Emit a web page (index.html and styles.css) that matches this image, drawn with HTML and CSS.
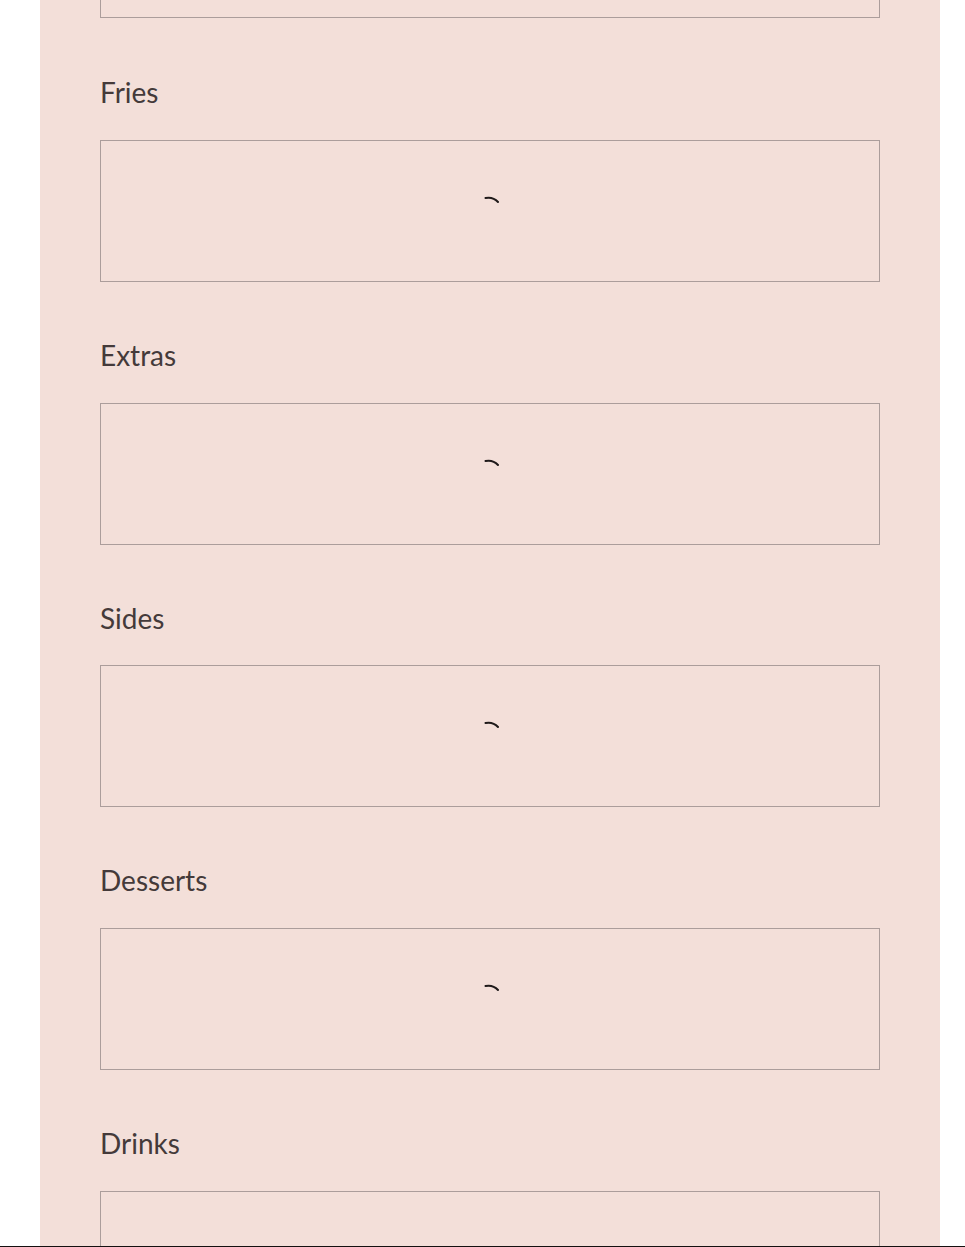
FILE: index.html
```html
<!DOCTYPE html>
<html>
<head>
<meta charset="utf-8">
<link rel="stylesheet" href="styles.css">
</head>
<body>
<main class="panel">
  <div class="box box-partial"></div>
  <section class="section section-first">
    <h2 class="title">Fries</h2>
    <div class="box"><svg class="spinner" viewBox="0 0 30 30" width="30" height="30"><path d="M10.5 2 Q18 0.5 23 6" /></svg></div>
  </section>
  <section class="section">
    <h2 class="title">Extras</h2>
    <div class="box"><svg class="spinner" viewBox="0 0 30 30" width="30" height="30"><path d="M10.5 2 Q18 0.5 23 6" /></svg></div>
  </section>
  <section class="section">
    <h2 class="title">Sides</h2>
    <div class="box"><svg class="spinner" viewBox="0 0 30 30" width="30" height="30"><path d="M10.5 2 Q18 0.5 23 6" /></svg></div>
  </section>
  <section class="section">
    <h2 class="title">Desserts</h2>
    <div class="box"><svg class="spinner" viewBox="0 0 30 30" width="30" height="30"><path d="M10.5 2 Q18 0.5 23 6" /></svg></div>
  </section>
  <section class="section">
    <h2 class="title">Drinks</h2>
    <div class="box"><svg class="spinner" viewBox="0 0 30 30" width="30" height="30"><path d="M10.5 2 Q18 0.5 23 6" /></svg></div>
  </section>
</main>
</body>
</html>
```
FILE: styles.css
```css
html {
  margin: 0;
  padding: 0;
  background: #ffffff;
}
body {
  margin: 0;
  padding: 0;
  box-sizing: border-box;
  height: 1247px;
  overflow: hidden;
  border-bottom: 1px solid #141010;
}
.panel {
  margin: 0 25px 0 40px;
  width: 900px;
  box-sizing: border-box;
  padding: 0 60px;
  background: #f3dfd9;
  height: 100%;
  overflow: hidden;
}
.section {
  display: flex;
  flex-direction: column;
}
.title {
  margin: 0;
  padding: 56px 0 30.75px;
  font-family: "Lato", "Liberation Sans", sans-serif;
  font-weight: 400;
  font-size: 28px;
  line-height: 34px;
  color: #443a3a;
}
.section-first .title {
  padding-top: 57px;
}
.box {
  box-sizing: border-box;
  height: 142px;
  border: 1px solid #ab9d9b;
  display: flex;
  align-items: center;
  justify-content: center;
}
.box-partial {
  height: 18px;
  border-top: none;
}
.spinner {
  display: block;
  fill: none;
  stroke: #1f1a1a;
  stroke-width: 2;
  stroke-linecap: round;
}
```
